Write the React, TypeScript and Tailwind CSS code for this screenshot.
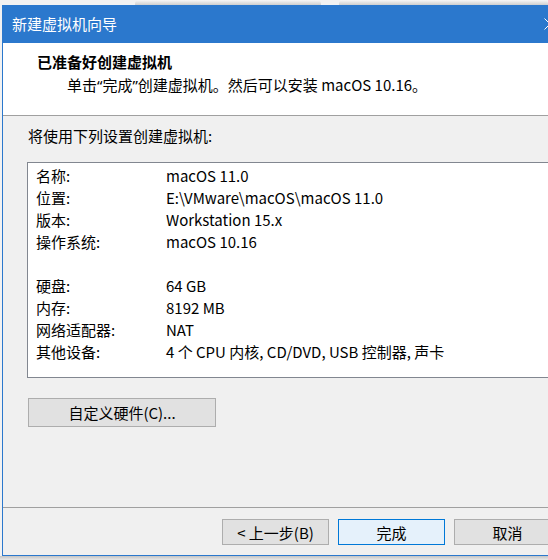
const rows: [string, string][] = [
  ['名称:', 'macOS 11.0'],
  ['位置:', 'E:\\VMware\\macOS\\macOS 11.0'],
  ['版本:', 'Workstation 15.x'],
  ['操作系统:', 'macOS 10.16'],
  ['', ''],
  ['硬盘:', '64 GB'],
  ['内存:', '8192 MB'],
  ['网络适配器:', 'NAT'],
  ['其他设备:', '4 个 CPU 内核, CD/DVD, USB 控制器, 声卡'],
]

function WinButton({
  label,
  primary = false,
  className = '',
}: {
  label: string
  primary?: boolean
  className?: string
}) {
  return (
    <button
      className={`flex items-center justify-center border leading-none ${
        primary
          ? 'border-[#0078d7] bg-[#e5f1fb]'
          : 'border-[#adadad] bg-[#e1e1e1]'
      } ${className}`}
    >
      {label}
    </button>
  )
}

// narrow latin quotes, as the system UI font renders them
function Q({ children }: { children: string }) {
  return <span className="font-['Noto_Sans',sans-serif]">{children}</span>
}

export default function App() {
  return (
    <div className="w-[548px] h-[560px] overflow-hidden bg-[#f2f2f2] text-[15px] text-black font-['Noto_Sans_CJK_SC',sans-serif]">
      {/* tabs of the window behind */}
      <div className="flex h-[5px] gap-[18px] pl-[135px]">
        <div className="w-[195px] rounded-t-[4px] bg-gradient-to-b from-[#f7f7f7] to-[#cfcfcf]" />
        <div className="w-[220px] rounded-t-[4px] bg-gradient-to-b from-[#f7f7f7] to-[#cfcfcf]" />
      </div>

      <div className="relative ml-[2px] flex h-[551px] w-[580px] flex-col border-b border-l border-[#2b78cd] bg-[#f0f0f0]">
        {/* title bar */}
        <div className="flex h-[38px] items-center bg-[#2b78cd] pl-[9px] text-white">
          新建虚拟机向导
        </div>
        <svg
          className="absolute left-[541px] top-[13px]"
          width="12"
          height="12"
          viewBox="0 0 12 12"
          fill="none"
          stroke="white"
          strokeWidth="1"
        >
          <path d="M0.5 0.5 11.5 11.5 M11.5 0.5 0.5 11.5" />
        </svg>

        {/* header */}
        <div className="flex h-[73px] flex-col border-b border-[#a0a0a0] bg-white pl-[34px] pt-[8px]">
          <div className="font-bold leading-[22px]">已准备好创建虚拟机</div>
          <div className="mt-px pl-[30px] leading-[22px]">
            单击<Q>“</Q>完成<Q>”</Q>创建虚拟机。然后可以安装 macOS 10.16。
          </div>
        </div>

        {/* body */}
        <div className="flex h-[391px] flex-col pl-[24px] pt-[9px]">
          <div className="pl-[1px] leading-[22px]">将使用下列设置创建虚拟机:</div>
          <div className="mt-[15px] h-[216px] w-[540px] border border-[#828790] bg-white pl-[8px] pt-[2px]">
            {rows.map(([label, value], i) => (
              <div key={i} className="flex h-[22px] items-center">
                <span className="w-[130px]">{label}</span>
                <span>{value}</span>
              </div>
            ))}
          </div>
          <WinButton
            label="自定义硬件(C)..."
            className="ml-[1px] mt-[20px] h-[29px] w-[188px]"
          />
        </div>

        {/* footer */}
        <div className="flex h-[48px] gap-[9px] border-t border-[#a0a0a0] pl-[219px] pt-[11px]">
          <WinButton label="< 上一步(B)" className="h-[26px] w-[107px]" />
          <WinButton label="完成" primary className="h-[26px] w-[107px]" />
          <WinButton label="取消" className="h-[26px] w-[107px]" />
        </div>
      </div>
      <div className="h-[4px] bg-gradient-to-b from-[#c4c4c4] to-[#e8e8e8]" />
    </div>
  )
}
